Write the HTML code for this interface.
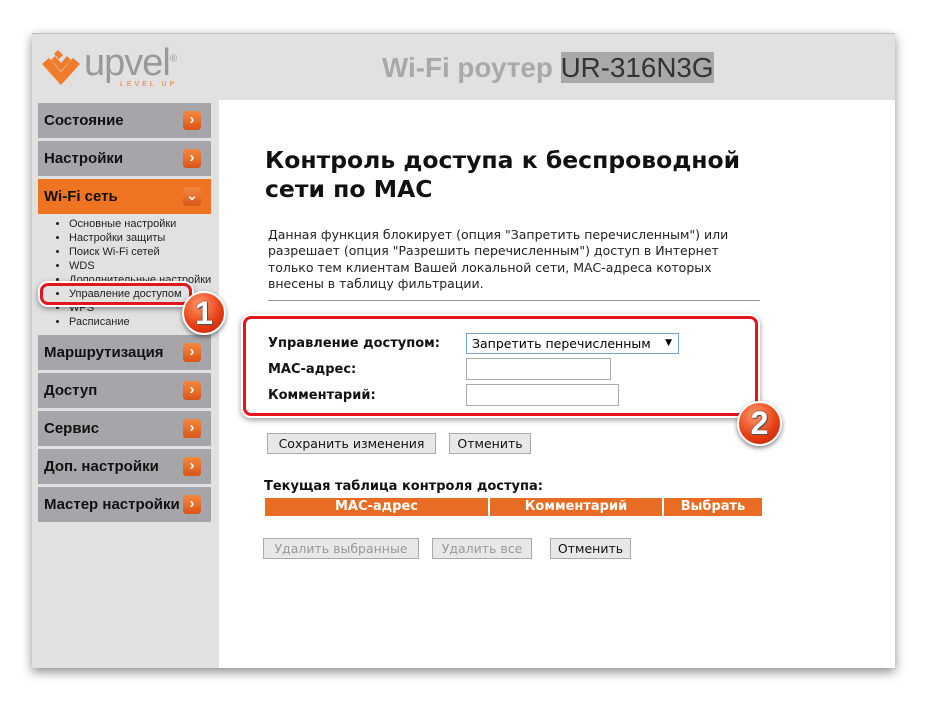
<!DOCTYPE html>
<html><head><meta charset="utf-8"><style>
*{margin:0;padding:0;box-sizing:border-box}
body{width:927px;height:701px;background:#fff;position:relative;overflow:hidden;font-family:"Liberation Sans","DejaVu Sans",sans-serif}
.frame{position:absolute;left:32px;top:33px;width:863px;height:635px;background:#e1e1e1;border-top:1px solid #bdbdbd;box-shadow:0 4px 10px rgba(0,0,0,.45)}
.content{position:absolute;left:219px;top:100px;width:676px;height:568px;background:#fff}
.hdr{position:absolute;left:382px;top:52px;font-size:27.8px;font-weight:bold;color:#a9a9a9}
.hdr span{background:#a9a9a9;color:#333;font-weight:normal}
.nav{position:absolute;left:38px;width:173px;height:35px;background:#a6a6aa;font-weight:bold;font-size:15px;color:#111;padding:9px 0 0 6px}
.nav.on{background:#ee7421}
.nav i{position:absolute;right:10px;top:8px;width:18px;height:19px;background:linear-gradient(#f4893e,#d8561a);border-radius:3px;color:#fff;font-style:normal;font-size:15px;font-weight:bold;text-align:center;line-height:18px}
.sub{position:absolute;left:58px;top:217px;font-size:11px;color:#222;line-height:14px;list-style:disc;padding-left:11px}
.t{position:absolute;font-family:"DejaVu Sans",sans-serif;color:#111}
.btn{position:absolute;height:21px;border:1px solid #aaa;background:#e8e8e8;font-family:"DejaVu Sans",sans-serif;font-size:12.5px;text-align:center;line-height:19px;color:#111}
.btn.d{color:#999}
.inp{position:absolute;border:1px solid #aaa;background:#fff}
.th{position:absolute;top:498px;height:18px;background:#e86c23;color:#fff;font-weight:bold;font-size:13px;text-align:center;line-height:18px;font-family:"DejaVu Sans",sans-serif}
.rb{position:absolute;border:3px solid #e4151c;border-radius:8px;box-shadow:0 0 0 2px #fff,0 2px 6px 2px rgba(0,0,0,.4)}
.circ{position:absolute;border-radius:50%;background:radial-gradient(circle at 40% 30%,#ff9a6a,#e53b10 60%,#b8200a);border:2px solid #fff;box-shadow:0 2px 5px rgba(0,0,0,.5);color:#fff;font-weight:bold;text-align:center;font-size:32px;text-shadow:0 0 2px #444,1px 1px 0 #555}
</style></head><body>
<div class="frame"></div>
<div class="content"></div>
<svg style="position:absolute;left:42px;top:50px" width="38" height="36" viewBox="0 0 38 36"><path d="M0 14 L7 8 L19 22 L31 8 L38 14 L19 35 Z" fill="#ef7b2b"/><path d="M9 10 L13 6 L19 13 L25 6 L29 10 L19 21 Z" fill="#ef7b2b"/><path d="M12 4 L16 0 L21 5 L17 9 Z" fill="#ef7b2b"/></svg>
<div style="position:absolute;left:84px;top:42px;font-size:38px;color:#999;letter-spacing:-1px;font-weight:normal">upvel<sup style="font-size:10px">®</sup></div>
<div style="position:absolute;left:120px;top:81px;font-size:7px;color:#ef7b2b;letter-spacing:3px">LEVEL UP</div>
<div class="hdr">Wi-Fi роутер <span>UR-316N3G</span></div>
<div class="nav" style="top:103px">Состояние<i>›</i></div>
<div class="nav" style="top:141px">Настройки<i>›</i></div>
<div class="nav on" style="top:179px">Wi-Fi сеть<i>⌄</i></div>
<ul class="sub"><li>Основные настройки</li><li>Настройки защиты</li><li>Поиск Wi-Fi сетей</li><li>WDS</li><li>Дополнительные настройки</li><li>Управление доступом</li><li>WPS</li><li>Расписание</li></ul>
<div class="nav" style="top:335px">Маршрутизация<i>›</i></div>
<div class="nav" style="top:373px">Доступ<i>›</i></div>
<div class="nav" style="top:411px">Сервис<i>›</i></div>
<div class="nav" style="top:449px">Доп. настройки<i>›</i></div>
<div class="nav" style="top:487px">Мастер настройки<i>›</i></div>
<div class="rb" style="left:40px;top:283px;width:152px;height:22px"></div>
<div class="circ" style="left:182px;top:291px;width:44px;height:44px;line-height:40px">1</div>
<div class="t" style="left:265px;top:146px;font-size:23.5px;font-weight:bold;line-height:29px">Контроль доступа к беспроводной<br>сети по МАС</div>
<div class="t" style="left:268px;top:227px;font-size:12.5px;line-height:16.3px;color:#222">Данная функция блокирует (опция "Запретить перечисленным") или<br>разрешает (опция "Разрешить перечисленным") доступ в Интернет<br>только тем клиентам Вашей локальной сети, МАС-адреса которых<br>внесены в таблицу фильтрации.</div>
<div style="position:absolute;left:268px;top:300px;width:492px;height:1px;background:#999"></div>
<div class="rb" style="left:243px;top:316px;width:515px;height:100px"></div>
<div class="t" style="left:268px;top:336px;font-size:13px;font-weight:bold">Управление доступом:</div>
<div class="t" style="left:268px;top:362px;font-size:13px;font-weight:bold">МАС-адрес:</div>
<div class="t" style="left:268px;top:388px;font-size:13px;font-weight:bold">Комментарий:</div>
<div class="inp" style="left:466px;top:333px;width:213px;height:21px;border-color:#7aa0d0;font-family:'DejaVu Sans',sans-serif;font-size:12.5px;padding:2px 5px">Запретить перечисленным <span style="position:absolute;right:6px;top:4px;font-size:9px">▼</span></div>
<div class="inp" style="left:466px;top:358px;width:145px;height:22px"></div>
<div class="inp" style="left:466px;top:384px;width:153px;height:22px"></div>
<div class="circ" style="left:737px;top:401px;width:45px;height:45px;line-height:41px">2</div>
<div class="btn" style="left:267px;top:433px;width:169px">Сохранить изменения</div>
<div class="btn" style="left:449px;top:433px;width:82px">Отменить</div>
<div class="t" style="left:264px;top:479px;font-size:13px;font-weight:bold">Текущая таблица контроля доступа:</div>
<div class="th" style="left:265px;width:223px">МАС-адрес</div>
<div class="th" style="left:490px;width:172px">Комментарий</div>
<div class="th" style="left:664px;width:98px">Выбрать</div>
<div class="btn d" style="left:263px;top:538px;width:156px">Удалить выбранные</div>
<div class="btn d" style="left:432px;top:538px;width:100px">Удалить все</div>
<div class="btn" style="left:550px;top:538px;width:81px">Отменить</div>
</body></html>
